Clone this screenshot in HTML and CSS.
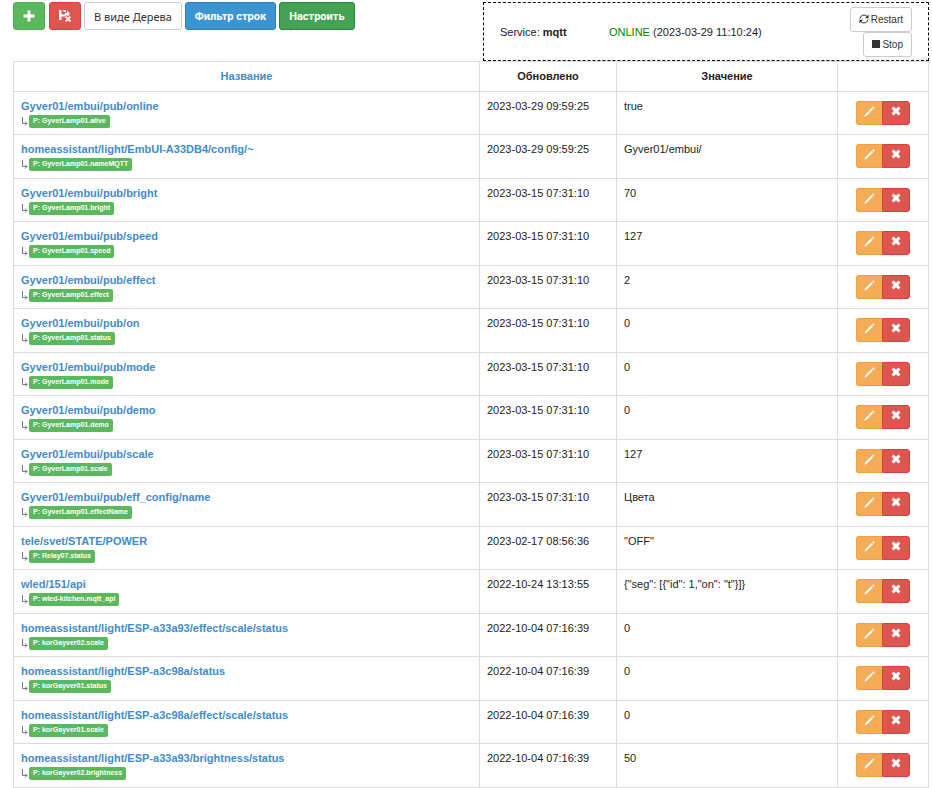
FILE: index.html
```html
<!DOCTYPE html>
<html lang="ru">
<head>
    <meta charset="UTF-8">
    <meta name="viewport" content="width=device-width, initial-scale=1.0">
    <title>MQTT</title>
    <link rel="stylesheet" href="styles.css">
</head>
<body>
    <!-- Icons used by the buttons -->
    <svg class="sprite" aria-hidden="true">
        <symbol id="i-plus" viewBox="0 0 14 14"><path d="M5.500 1.500h3v4h4v3h-4v4h-3v-4h-4v-3h4z"/></symbol>
        <symbol id="i-save" viewBox="0 0 14 14"><path d="M1 1h2.500v4.500H7V4h2V1.500L11.500 4v2L10 7 8.500 6 7 7.500H3.500V11H1z"/><path d="M5.500 1H8v2H5.500z"/><path d="M7 8.200L8.200 7 10 8.800 11.800 7 13 8.200l-1.700 1.800 1.700 1.800-1.200 1.200L10 11.200 8.200 13 7 11.800 8.700 10z"/></symbol>
        <symbol id="i-pencil" viewBox="0 0 12 12"><path d="M10 .4L11.600 2l-1.200 1.200-1.600-1.600zM8.200 2.200l1.600 1.600-6.600 6.600L.4 11.600l1.200-2.800z"/></symbol>
        <symbol id="i-remove" viewBox="0 0 10 10"><path d="M2.500.6L5 2.700 7.500.6l1.900 1.900L7.200 5l2.200 2.500-1.900 1.900L5 7.300 2.500 9.400.6 7.500 2.800 5 .6 2.500z"/></symbol>
        <symbol id="i-refresh" viewBox="0 0 10 10"><path d="M1 4.600A4 4 0 0 1 8 2.400M9 5.400A4 4 0 0 1 2 7.600" fill="none" stroke="currentColor"/><path d="M9.600.6v3.600H6zM.4 9.400V5.800H4z"/></symbol>
    </svg>

    <header class="top">
        <div class="toolbar">
            <button type="button" class="btn btn-add" aria-label="Добавить"><svg class="icon icon-lg"><use href="#i-plus"/></svg></button>
            <button type="button" class="btn btn-clear" aria-label="Удалить"><svg class="icon icon-lg"><use href="#i-save"/></svg></button>
            <button type="button" class="btn btn-tree">В виде Дерева</button>
            <button type="button" class="btn btn-filter">Фильтр строк</button>
            <button type="button" class="btn btn-setup">Настроить</button>
        </div>
        <div class="service">
            <div class="service-name">Service: <b>mqtt</b></div>
            <div class="service-state"><span class="online">ONLINE</span> (2023-03-29 11:10:24)</div>
            <div class="service-actions">
                <button type="button" class="btn-small"><svg class="icon"><use href="#i-refresh"/></svg>Restart</button>
                <button type="button" class="btn-small"><span class="stop"></span>Stop</button>
            </div>
        </div>
    </header>

    <table class="topics">
        <colgroup>
            <col>
            <col class="col-date">
            <col class="col-value">
            <col class="col-actions">
        </colgroup>
        <thead>
            <tr><th><a href="#">Название</a></th><th>Обновлено</th><th>Значение</th><th></th></tr>
        </thead>
        <tbody id="rows"></tbody>
    </table>

    <script src="script.js"></script>
</body>
</html>
```
FILE: styles.css
```css
* {
    box-sizing: border-box;
}

body {
    margin: 0;
    padding: 2px 3px 0 13px;
    background-color: #fff;
    color: #222;
    font-family: "Liberation Sans", Arial, sans-serif;
    font-size: 11px;
    line-height: 16px;
}

a {
    color: #428bca;
    text-decoration: none;
}

a:hover {
    text-decoration: underline;
}

button {
    font-family: inherit;
    cursor: pointer;
}

.sprite {
    display: none;
}

.icon {
    flex: none;
    width: 10px;
    height: 10px;
    fill: currentColor;
}

.icon-lg {
    width: 14px;
    height: 14px;
}

/* Toolbar and service status */
.top {
    display: flex;
    justify-content: space-between;
    align-items: flex-start;
}

.toolbar {
    display: flex;
    gap: 3px;
}

.btn {
    display: flex;
    align-items: center;
    justify-content: center;
    height: 28px;
    padding: 0 9px;
    border: 1px solid;
    border-radius: 3px;
    color: #fff;
    font-size: 11px;
}

.btn-add,
.btn-clear {
    width: 32px;
    padding: 0;
}

.btn-add {
    margin-right: 1px;
    background-color: #5cb85c;
    border-color: #4cae4c;
}

.btn-clear {
    background-color: #df5650;
    border-color: #d9413d;
}

.btn-tree {
    background-color: #fff;
    border-color: #ccc;
    color: #333;
    font-family: "Noto Sans", sans-serif;
}

.btn-filter,
.btn-setup {
    font-family: Roboto, sans-serif;
    font-weight: bold;
}

.btn-filter {
    background-color: #3c95d0;
    border-color: #2e7fb8;
}

.btn-setup {
    background-color: #43a352;
    border-color: #2f8540;
}

.service {
    display: flex;
    align-items: center;
    width: 446px;
    height: 59px;
    padding: 0 16px;
    border: 1px dashed #000;
}

.service-name {
    width: 109px;
}

.online {
    color: #008000;
}

.service-actions {
    display: flex;
    flex-direction: column;
    align-items: flex-end;
    margin-left: auto;
}

.btn-small {
    display: flex;
    align-items: center;
    gap: 2px;
    height: 25px;
    padding: 0 8px;
    background-color: #fff;
    border: 1px solid #ccc;
    border-radius: 3px;
    color: #333;
    font-size: 10px;
}

.stop {
    width: 8px;
    height: 8px;
    background-color: #333;
}

/* Topics table */
.topics {
    width: 100%;
    table-layout: fixed;
    border-collapse: collapse;
}

.col-date {
    width: 137px;
}

.col-value {
    width: 221px;
}

.col-actions {
    width: 91px;
}

th,
td {
    border: 1px solid #ddd;
    padding: 6px 7px 0;
    text-align: left;
    vertical-align: top;
}

th {
    height: 30px;
    text-align: center;
}

td {
    height: 43px;
}

tr:nth-child(even) td {
    height: 44px;
}

.topic {
    display: block;
    font-weight: bold;
}

.link {
    display: flex;
    align-items: center;
    gap: 1px;
    height: 13px;
    margin-top: 1px;
}

.arrow {
    width: 7px;
    height: 10px;
    fill: none;
    stroke: #777;
}

.tag {
    height: 13px;
    padding: 0 4px;
    background-color: #5cb85c;
    border-radius: 2px;
    color: #fff;
    font-size: 7px;
    font-weight: bold;
    line-height: 12px;
}

.actions {
    display: flex;
    justify-content: center;
    padding-top: 3px;
}

.edit,
.remove {
    display: flex;
    justify-content: center;
    height: 24px;
    padding: 4px 0 0;
    border: 1px solid;
    color: #fff;
}

.edit {
    width: 26px;
    background-color: #f5ac57;
    border-color: #f0a040;
    border-right: 0;
    border-radius: 3px 0 0 3px;
}

.edit .icon {
    width: 11px;
    height: 11px;
}

.remove {
    width: 28px;
    background-color: #df5650;
    border-color: #d9413d;
    border-radius: 0 3px 3px 0;
}
```
FILE: script.js
```javascript
const topics = [
    ['Gyver01/embui/pub/online', 'GyverLamp01.alive', '2023-03-29 09:59:25', 'true'],
    ['homeassistant/light/EmbUI-A33DB4/config/~', 'GyverLamp01.nameMQTT', '2023-03-29 09:59:25', 'Gyver01/embui/'],
    ['Gyver01/embui/pub/bright', 'GyverLamp01.bright', '2023-03-15 07:31:10', '70'],
    ['Gyver01/embui/pub/speed', 'GyverLamp01.speed', '2023-03-15 07:31:10', '127'],
    ['Gyver01/embui/pub/effect', 'GyverLamp01.effect', '2023-03-15 07:31:10', '2'],
    ['Gyver01/embui/pub/on', 'GyverLamp01.status', '2023-03-15 07:31:10', '0'],
    ['Gyver01/embui/pub/mode', 'GyverLamp01.mode', '2023-03-15 07:31:10', '0'],
    ['Gyver01/embui/pub/demo', 'GyverLamp01.demo', '2023-03-15 07:31:10', '0'],
    ['Gyver01/embui/pub/scale', 'GyverLamp01.scale', '2023-03-15 07:31:10', '127'],
    ['Gyver01/embui/pub/eff_config/name', 'GyverLamp01.effectName', '2023-03-15 07:31:10', 'Цвета'],
    ['tele/svet/STATE/POWER', 'Relay07.status', '2023-02-17 08:56:36', '"OFF"'],
    ['wled/151/api', 'wled-kitchen.mqtt_api', '2022-10-24 13:13:55', '{"seg": [{"id": 1,"on": "t"}]}'],
    ['homeassistant/light/ESP-a33a93/effect/scale/status', 'korGayver02.scale', '2022-10-04 07:16:39', '0'],
    ['homeassistant/light/ESP-a3c98a/status', 'korGayver01.status', '2022-10-04 07:16:39', '0'],
    ['homeassistant/light/ESP-a3c98a/effect/scale/status', 'korGayver01.scale', '2022-10-04 07:16:39', '0'],
    ['homeassistant/light/ESP-a33a93/brightness/status', 'korGayver02.brightness', '2022-10-04 07:16:39', '50']
];

// Build one table row per topic
document.getElementById('rows').innerHTML = topics.map(([name, property, updated, value]) => `
    <tr>
        <td>
            <a class="topic" href="#">${name}</a>
            <div class="link">
                <svg class="arrow" viewBox="0 0 7 10"><path d="M1.500 0v6.500H6M4 4.500l2 2-2 2"/></svg>
                <span class="tag">P: ${property}</span>
            </div>
        </td>
        <td>${updated}</td>
        <td>${value}</td>
        <td>
            <div class="actions">
                <button type="button" class="edit" aria-label="Изменить"><svg class="icon"><use href="#i-pencil"/></svg></button>
                <button type="button" class="remove" aria-label="Удалить"><svg class="icon"><use href="#i-remove"/></svg></button>
            </div>
        </td>
    </tr>`).join('');
```
